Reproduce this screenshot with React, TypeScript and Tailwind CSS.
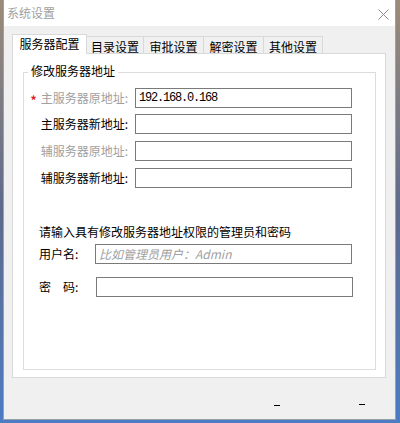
const font = { fontFamily: '"Noto Sans CJK SC", "Microsoft YaHei", sans-serif' };

const tabs = [
  { label: '目录设置', w: 'w-[57px]' },
  { label: '审批设置', w: 'w-[60px]' },
  { label: '解密设置', w: 'w-[60px]' },
  { label: '其他设置', w: 'w-[59px]' },
];

const Field = ({ value, placeholder, width }: { value?: string; placeholder?: string; width: string }) => (
  <div className={`h-[20px] ${width} border border-[#7a7a7a] bg-white flex items-center px-[3px]`}>
    {value && (
      <span className="text-[12px] tracking-[-1.2px] text-black" style={{ fontFamily: '"Liberation Mono", monospace' }}>
        {value}
      </span>
    )}
    {placeholder && (
      <span className="text-[12px] italic text-[#a0a0a0] leading-none">{placeholder}</span>
    )}
  </div>
);

const AddressRow = ({
  label,
  muted,
  required,
  value,
  className,
}: {
  label: string;
  muted?: boolean;
  required?: boolean;
  value?: string;
  className: string;
}) => (
  <div className={`flex items-center ${className}`}>
    <div className={`w-[104px] text-right text-[12px] leading-[20px] ${muted ? 'text-[#a0a0a0]' : 'text-black'}`}>
      {required && <span className="text-[#e0201c] font-bold mr-[4px] relative top-[2px]">*</span>}
      {label}:
    </div>
    <div className="ml-[7px]">
      <Field value={value} width="w-[217px]" />
    </div>
  </div>
);

export default function App() {
  return (
    <div
      className="w-[400px] h-[423px] overflow-hidden bg-gradient-to-b from-[#9c8b78] via-[#5d6a8c] to-[#4b7cc4]"
      style={font}
    >
      <div className="ml-[3px] w-[393px] h-[420px] flex flex-col border-x border-b border-[#9aa0a8]">
        {/* title bar */}
        <div className="h-[26px] bg-white flex items-center justify-between pl-[3px] pr-[6px]">
          <span className="text-[12px] text-[#a0a0a0] leading-[18px]">系统设置</span>
          <svg width="11" height="11" viewBox="0 0 11 11" className="mt-[2px]">
            <path d="M0.5 0.5 L10.5 10.5 M10.5 0.5 L0.5 10.5" stroke="#8a8a8a" strokeWidth="1" />
          </svg>
        </div>

        {/* dialog body */}
        <div className="flex-1 bg-[#f0f0f0] pt-[8px] pl-[8px] pr-[9px]">
          <div className="flex items-end h-[19px]">
            <div className="relative z-10 -mb-px h-[20px] w-[75px] bg-white border border-b-0 border-[#d9d9d9] flex items-center justify-center pb-[1px] text-[12px] text-black">
              服务器配置
            </div>
            {tabs.map((t) => (
              <div
                key={t.label}
                className={`h-[17px] ${t.w} border-t border-r border-[#d9d9d9] bg-[#f0f0f0] flex items-center justify-center pt-[4px] text-[12px] leading-[14px] text-black`}
              >
                {t.label}
              </div>
            ))}
          </div>

          {/* tab page */}
          <div className="w-[374px] h-[325px] bg-white border border-[#d9d9d9]">
            <div className="relative mt-[18px] ml-[10px] w-[353px] h-[298px] border border-[#dcdcdc]">
              <span className="absolute left-[4px] top-[-11px] px-[3px] bg-white text-[12px] leading-[18px] text-black">
                修改服务器地址
              </span>

              <AddressRow className="mt-[15px]" label="主服务器原地址" muted required value="192.168.0.168" />
              <AddressRow className="mt-[6px]" label="主服务器新地址" />
              <AddressRow className="mt-[7px]" label="辅服务器原地址" muted />
              <AddressRow className="mt-[7px]" label="辅服务器新地址" />

              <div className="mt-[35px] ml-[15px] text-[12px] leading-[18px] text-black">
                请输入具有修改服务器地址权限的管理员和密码
              </div>
              <div className="mt-[3px] ml-[15px] flex items-center">
                <span className="w-[56px] text-[12px] leading-[20px] text-black">用户名:</span>
                <Field placeholder="比如管理员用户：Admin" width="w-[257px]" />
              </div>
              <div className="mt-[13px] ml-[15px] flex items-center">
                <span className="w-[57px] text-[12px] leading-[20px] text-black">密　码:</span>
                <Field width="w-[257px]" />
              </div>
            </div>
          </div>

          {/* button row, captions clipped */}
          <div className="flex items-start">
            <div className="mt-[27px] ml-[262px] w-[6px] h-[1px] bg-black" />
            <div className="mt-[26px] ml-[79px] w-[6px] h-[1px] bg-black" />
          </div>
        </div>
      </div>
    </div>
  );
}
